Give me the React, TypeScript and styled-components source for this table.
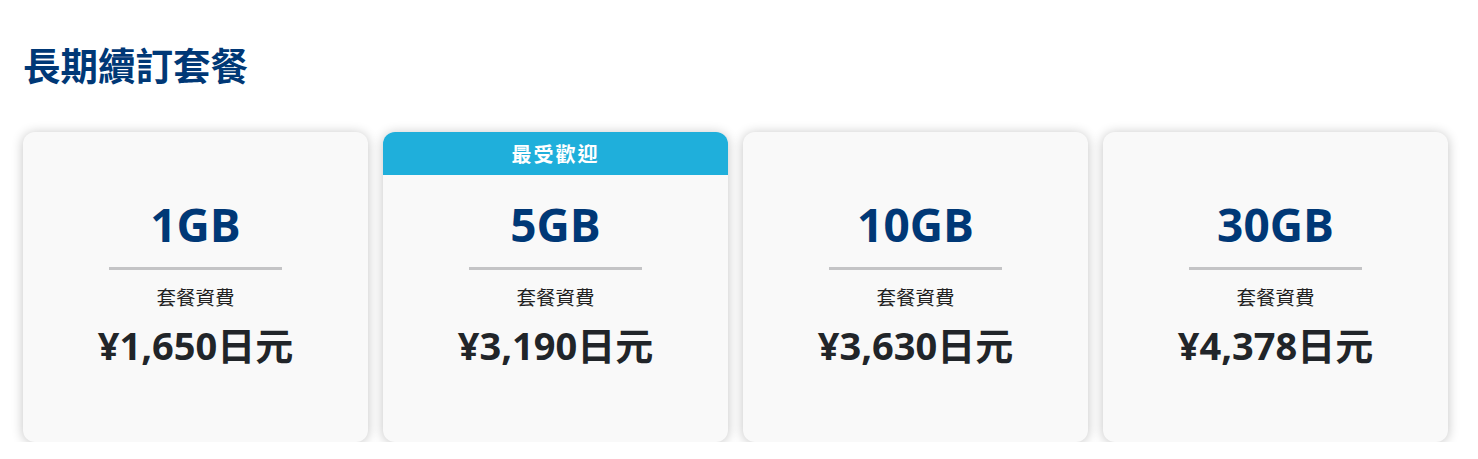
import React from 'react';
import styled, { createGlobalStyle } from 'styled-components';

const GlobalStyle = createGlobalStyle`
  body {
    margin: 0;
    background: #ffffff;
    font-family: 'Open Sans', 'Noto Sans CJK TC', sans-serif;
  }
`;

const Section = styled.section`
  padding: 41px 30px 0 23px;
`;

const Title = styled.h2`
  margin: 0 0 41px 0;
  font-size: 37.5px;
  line-height: 50px;
  font-weight: 700;
  color: #003876;
`;

const CardRow = styled.div`
  display: flex;
  gap: 15px;
`;

const Card = styled.div`
  position: relative;
  width: 345px;
  height: 310px;
  box-sizing: border-box;
  padding-bottom: 9px;
  background: #f9f9f9;
  border-radius: 12px;
  box-shadow: 0 1px 12px rgba(0, 0, 0, 0.24);
  overflow: hidden;
  display: flex;
  flex-direction: column;
  align-items: center;
  justify-content: center;
`;

const Badge = styled.div`
  position: absolute;
  top: 0;
  left: 0;
  right: 0;
  height: 43px;
  background: #1fafdb;
  color: #ffffff;
  font-size: 20px;
  font-weight: 700;
  letter-spacing: 2px;
  display: flex;
  align-items: center;
  justify-content: center;
`;

const Size = styled.div`
  font-size: 46px;
  line-height: 54px;
  font-weight: 700;
  color: #003876;
`;

const Divider = styled.hr`
  width: 50%;
  height: 3px;
  margin: 16px 0 14px;
  border: none;
  background: #c4c4c6;
`;

const Label = styled.div`
  font-size: 19.5px;
  line-height: 28px;
  color: #222222;
`;

const Price = styled.div`
  margin-top: 9px;
  font-size: 38px;
  line-height: 48px;
  font-weight: 700;
  color: #212529;
`;

interface Plan {
  size: string;
  price: string;
  popular?: boolean;
}

const plans: Plan[] = [
  { size: '1GB', price: '¥1,650日元' },
  { size: '5GB', price: '¥3,190日元', popular: true },
  { size: '10GB', price: '¥3,630日元' },
  { size: '30GB', price: '¥4,378日元' },
];

const App = () => {
  return (
    <>
      <GlobalStyle />
      <Section>
        <Title>長期續訂套餐</Title>
        <CardRow>
          {plans.map((p) => (
            <Card key={p.size}>
              {p.popular && <Badge>最受歡迎</Badge>}
              <Size>{p.size}</Size>
              <Divider />
              <Label>套餐資費</Label>
              <Price>{p.price}</Price>
            </Card>
          ))}
        </CardRow>
      </Section>
    </>
  );
};

export default App;
